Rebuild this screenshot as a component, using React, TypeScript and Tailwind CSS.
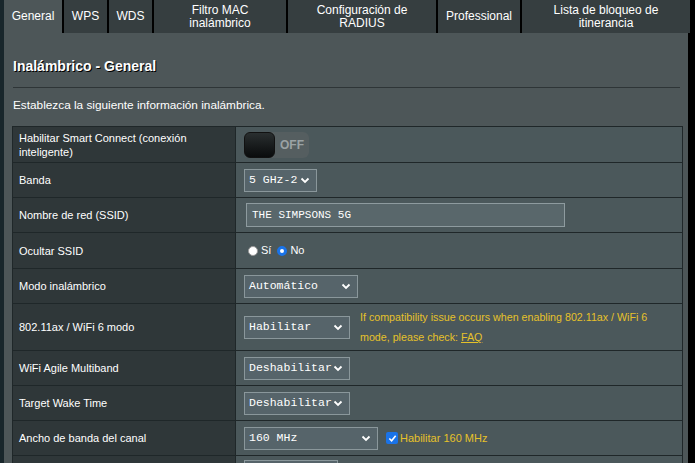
import React from 'react';

const tabs = [
  { label: 'General', w: 'w-[58px]', active: true },
  { label: 'WPS', w: 'w-[43px]' },
  { label: 'WDS', w: 'w-[43px]' },
  { label: 'Filtro MAC\ninalámbrico', w: 'w-[132px]' },
  { label: 'Configuración de\nRADIUS', w: 'w-[148px]' },
  { label: 'Professional', w: 'w-[82px]' },
  { label: 'Lista de bloqueo de\nitinerancia', w: 'w-[168px]' },
];

const Chevron = () => (
  <svg width="10" height="7" viewBox="0 0 10 7" className="shrink-0">
    <path d="M1.5 1.5 L5 5 L8.5 1.5" stroke="#ffffff" strokeWidth="1.8" fill="none" />
  </svg>
);

const Select = ({ value, w }: { value: string; w: string }) => (
  <div className={`${w} h-[23px] flex items-center justify-between pl-[4px] pr-[6px] bg-[#56646a] border border-[#8a979b] font-['Liberation_Mono',monospace] text-[11.5px] text-white`}>
    <span>{value}</span>
    <Chevron />
  </div>
);

const Row = ({ label, h, children }: { label: React.ReactNode; h: string; children?: React.ReactNode }) => (
  <div className={`flex ${h} border-b border-[#1f2729]`}>
    <div className="w-[223px] shrink-0 bg-[#2f3739] border-r border-[#1f2729] flex items-center pl-[6px] pr-2 text-[11px] leading-[14px] text-white">
      {label}
    </div>
    <div className="flex-1 bg-[#4b585b] flex items-center pl-[8px]">{children}</div>
  </div>
);

export default function App() {
  return (
    <div className="w-[695px] h-[463px] bg-black flex overflow-hidden font-['Liberation_Sans',Arial,sans-serif]">
      <div className="w-[4px] shrink-0 bg-[#18262b]" />
      <div className="w-[684px] shrink-0 flex flex-col">
        {/* tab strip */}
        <div className="h-[33px] flex gap-[2px] bg-black shrink-0 w-[680px]">
          {tabs.map((t) => (
            <div
              key={t.label}
              className={`${t.w} shrink-0 flex items-center justify-center text-center whitespace-pre-line text-[12px] leading-[13px] text-white ${t.active ? 'bg-[#4d5658]' : 'bg-[#363e40]'}`}
            >
              {t.label}
            </div>
          ))}
        </div>

        {/* panel */}
        <div className="flex-1 bg-[#4d5658] pl-[8px] pr-[5px]">
          <div className="ml-[1px] mr-[3px] pt-[24px] pb-[11px] border-b border-[#2e3537] text-[14px] leading-[19px] font-bold text-white [text-shadow:1px_1px_0_#000]">
            Inalámbrico - General
          </div>
          <div className="ml-[1px] pt-[8px] pb-[12px] text-[11.8px] leading-[18px] text-white">
            Establezca la siguiente información inalámbrica.
          </div>

          <div className="border-t border-l border-r border-[#1f2729]">
            <Row label={<span>Habilitar Smart Connect (conexión<br />inteligente)</span>} h="h-[36px]">
              <div className="w-[65px] h-[26px] rounded-[6px] bg-[#555e60] flex items-center">
                <div className="w-[31px] h-[26px] rounded-[6px] bg-gradient-to-b from-[#2a2f30] to-[#0a0c0d] border border-[#111]" />
                <span className="ml-[5px] text-[12px] font-bold text-[#9aa2a4]">OFF</span>
              </div>
            </Row>
            <Row label="Banda" h="h-[35px]">
              <Select value="5 GHz-2" w="w-[73px]" />
            </Row>
            <Row label="Nombre de red (SSID)" h="h-[35px]">
              <div className="ml-[2px] w-[319px] h-[24px] bg-[#59676b] border border-[#8e9b9f] flex items-center pl-[5px] font-['Liberation_Mono',monospace] text-[11px] text-white">
                THE SIMPSONS 5G
              </div>
            </Row>
            <Row label="Ocultar SSID" h="h-[36px]">
              <div className="flex items-center text-[11px] text-white ml-[4px]">
                <span className="w-[10px] h-[10px] rounded-full bg-white border border-[#999]" />
                <span className="ml-[3px]">Sí</span>
                <span className="ml-[6px] w-[10px] h-[10px] rounded-full bg-white border-[3px] border-[#1a73e8]" />
                <span className="ml-[3px]">No</span>
              </div>
            </Row>
            <Row label="Modo inalámbrico" h="h-[35px]">
              <Select value="Automático" w="w-[114px]" />
            </Row>
            <Row label="802.11ax / WiFi 6 modo" h="h-[47px]">
              <Select value="Habilitar" w="w-[106px]" />
              <div className="ml-[10px] text-[10.7px] leading-[20px] text-[#e6c12a] w-[300px]">
                If compatibility issue occurs when enabling 802.11ax / WiFi 6 mode, please check: <span className="underline">FAQ</span>
              </div>
            </Row>
            <Row label="WiFi Agile Multiband" h="h-[35px]">
              <Select value="Deshabilitar" w="w-[106px]" />
            </Row>
            <Row label="Target Wake Time" h="h-[35px]">
              <Select value="Deshabilitar" w="w-[106px]" />
            </Row>
            <Row label="Ancho de banda del canal" h="h-[35px]">
              <Select value="160 MHz" w="w-[134px]" />
              <span className="ml-[8px] w-[12px] h-[12px] rounded-[2px] bg-[#1a73e8] flex items-center justify-center">
                <svg width="9" height="9" viewBox="0 0 10 10">
                  <path d="M1.5 5 L4 7.5 L8.5 2" stroke="#fff" strokeWidth="1.8" fill="none" />
                </svg>
              </span>
              <span className="ml-[2px] text-[11px] text-[#e6c12a]">Habilitar 160 MHz</span>
            </Row>
            <Row label="" h="h-[35px]">
              <div className="self-start mt-[4px]">
                <Select value="" w="w-[94px]" />
              </div>
            </Row>
          </div>
        </div>
      </div>
    </div>
  );
}
